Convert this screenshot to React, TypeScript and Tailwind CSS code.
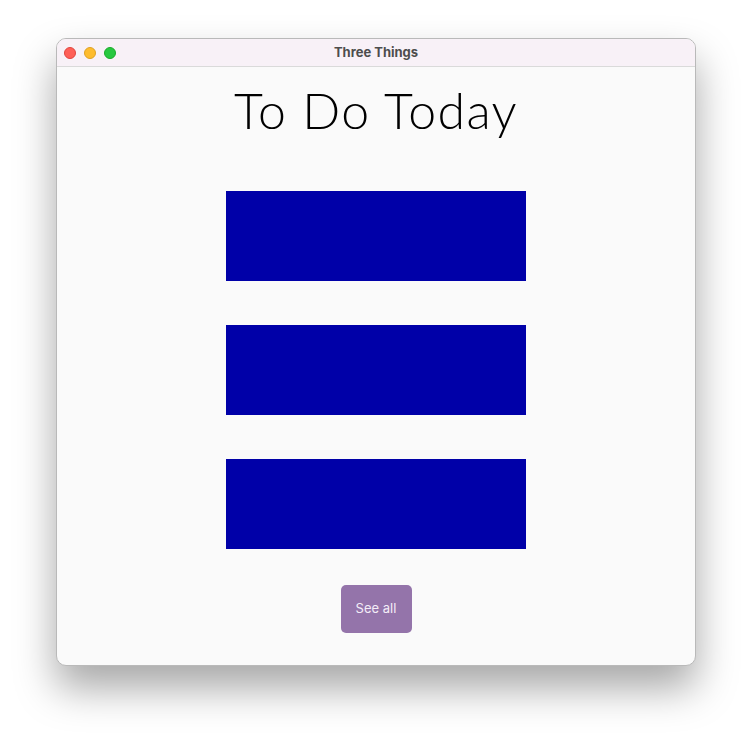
export default function App() {
  const items = [0, 1, 2];

  return (
    <div className="min-h-[740px] w-[752px] bg-white pl-[56px] pt-[38px]">
      {/* Window */}
      <div className="flex h-[628px] w-[640px] flex-col overflow-hidden rounded-[10px] border border-[#b9b9b9] bg-[#fafafa] shadow-[0_22px_40px_rgba(0,0,0,0.35)]">
        {/* Title bar */}
        <div className="relative flex h-[28px] shrink-0 items-center border-b border-[#dadada] bg-[#f8f1f7]">
          <div className="flex items-center gap-[8px] pl-[7px]">
            <span className="h-[12px] w-[12px] rounded-full border border-[#e0443e] bg-[#fe5f57]" />
            <span className="h-[12px] w-[12px] rounded-full border border-[#dea123] bg-[#febc2e]" />
            <span className="h-[12px] w-[12px] rounded-full border border-[#1aab29] bg-[#28c840]" />
          </div>
          <div className="absolute inset-0 flex items-center justify-center text-[13px] font-bold text-[#4d4d4d] [font-family:Inter,'Liberation_Sans',sans-serif]">
            Three Things
          </div>
        </div>

        {/* Content */}
        <div className="flex flex-col items-center">
          <h1 className="mt-[13px] text-[50px] font-light leading-[60px] tracking-[1.4px] text-black [font-family:Lato,'Liberation_Sans',sans-serif]">
            To Do Today
          </h1>

          <div className="mt-[51px] flex flex-col gap-[44px]">
            {items.map((i) => (
              <div key={i} className="h-[90px] w-[300px] bg-[#0000a8]" />
            ))}
          </div>

          <button className="mt-[36px] h-[48px] w-[71px] rounded-[5px] bg-[#9474aa] text-[13px] text-[#f3ecf7] [font-family:Inter,'Liberation_Sans',sans-serif]">
            See all
          </button>
        </div>
      </div>
    </div>
  );
}
